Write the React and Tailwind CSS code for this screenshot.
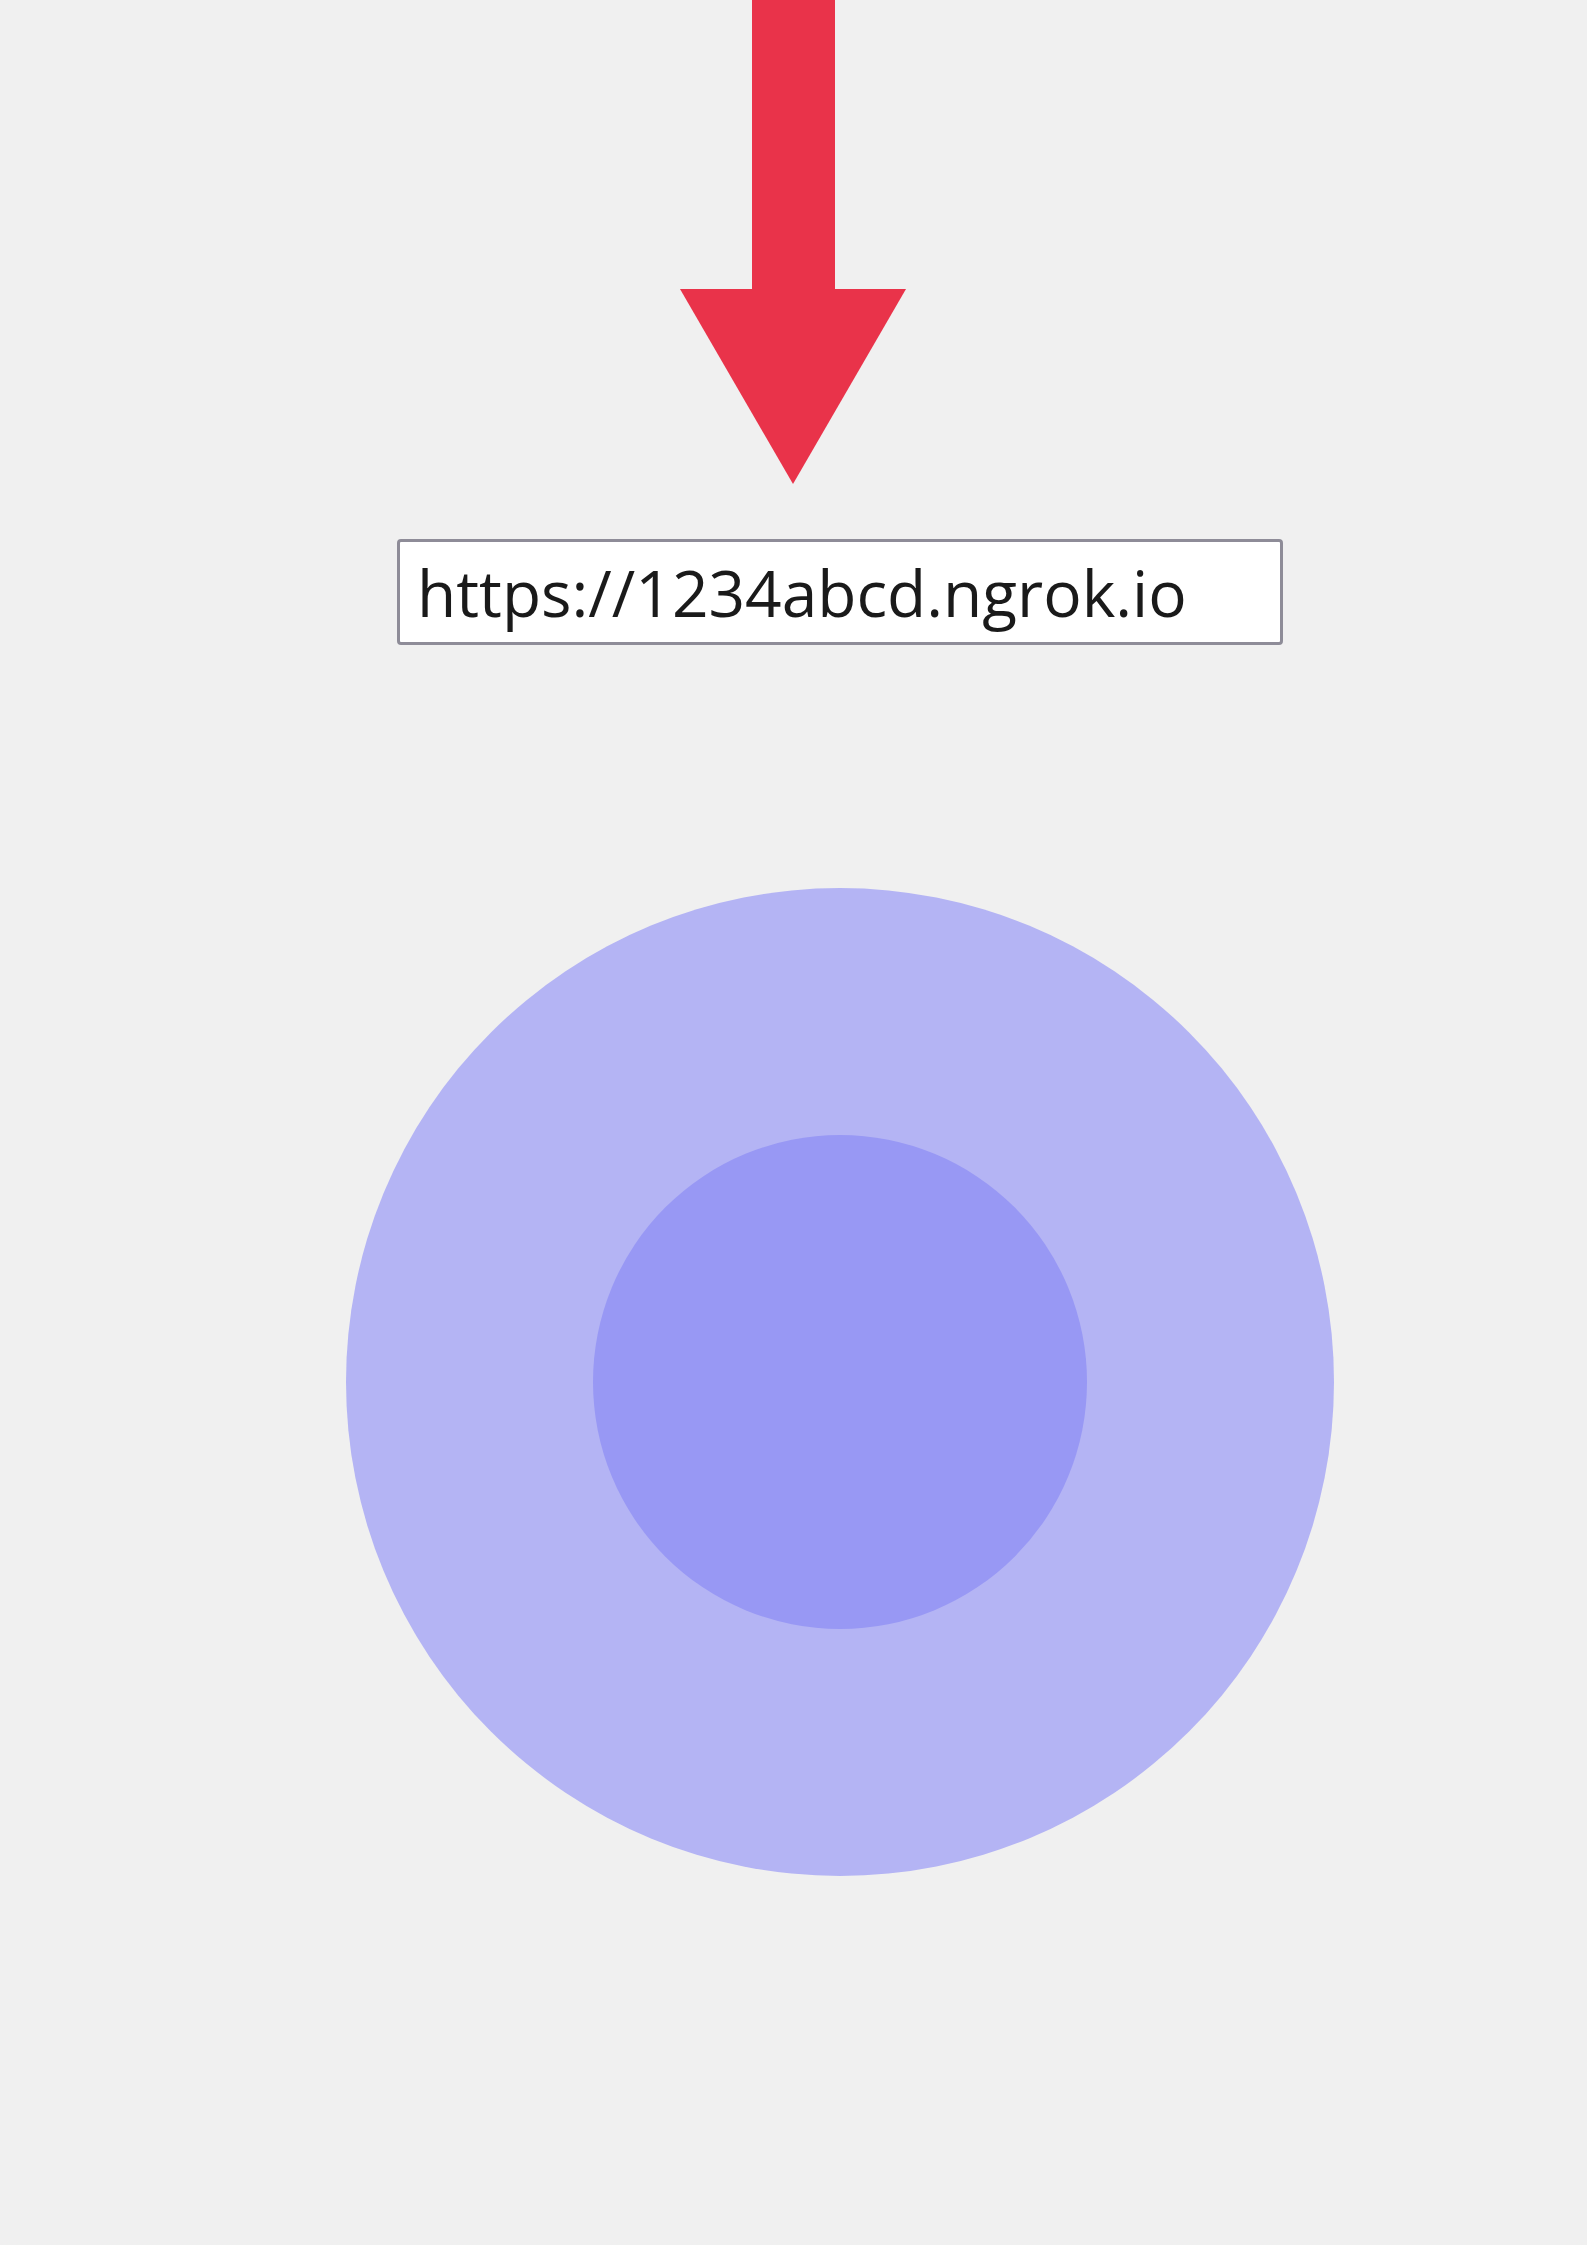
export default function App() {
  return (
    <div className="w-full h-[2245px] bg-[#f0f0f0] flex flex-col overflow-hidden">
      <div className="flex justify-center">
        <svg width="227" height="484" viewBox="0 0 227 484">
          <rect x="72" y="0" width="83" height="290" fill="#e9334a" />
          <polygon points="0,289 226,289 113,484" fill="#e9334a" />
        </svg>
      </div>
      <div className="ml-[397px] mt-[55px] w-[886px] h-[106px] bg-white border-[3px] border-[#8e8c98] rounded-[4px] flex items-center pl-[17px]">
        <span
          className="text-[#1a1a1a] text-[64px] leading-none font-medium tracking-[0px] mt-[2px]"
          style={{ fontFamily: '"Open Sans", "Liberation Sans", sans-serif' }}
        >
          https://1234abcd.ngrok.io
        </span>
      </div>
      <div className="ml-[346px] mt-[243px] w-[988px] h-[988px] rounded-full bg-[#b4b4f4] flex items-center justify-center">
        <div className="w-[494px] h-[494px] rounded-full bg-[#9898f4]" />
      </div>
    </div>
  );
}
